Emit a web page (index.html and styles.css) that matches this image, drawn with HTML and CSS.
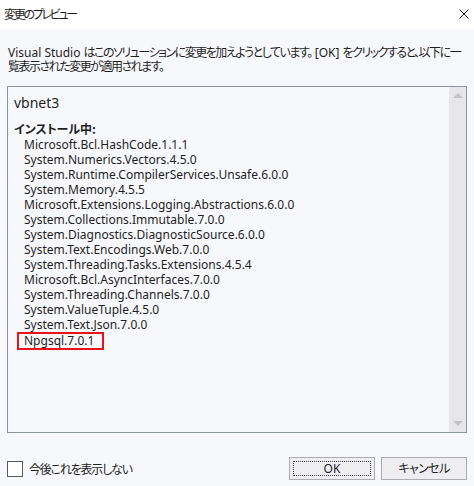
FILE: index.html
```html
<!DOCTYPE html>
<html lang="ja">
<head>
<meta charset="utf-8">
<title>変更のプレビュー</title>
<link rel="stylesheet" href="styles.css">
</head>
<body>
<div class="window">
  <div class="titlebar">
    <span class="title">変更のプレビュー</span>
    <svg class="close" width="10" height="10" viewBox="0 0 10 10" aria-hidden="true">
      <path d="M0.5 0.5 L9.5 9.5 M9.5 0.5 L0.5 9.5" stroke="#1a1a1a" stroke-width="1" fill="none"/>
    </svg>
  </div>
  <div class="body">
    <p class="desc">Visual Studio <span class="ja">はこのソリューションに変更を加えようとしています。</span> [OK] <span class="ja">をクリックすると、以下に一</span><br><span class="ja">覧表示された変更が適用されます。</span></p>
    <div class="listbox">
      <div class="listcontent">
        <div class="project">vbnet3</div>
        <div class="section">インストール中:</div>
        <div class="item">Microsoft.Bcl.HashCode.1.1.1</div>
        <div class="item">System.Numerics.Vectors.4.5.0</div>
        <div class="item">System.Runtime.CompilerServices.Unsafe.6.0.0</div>
        <div class="item">System.Memory.4.5.5</div>
        <div class="item">Microsoft.Extensions.Logging.Abstractions.6.0.0</div>
        <div class="item">System.Collections.Immutable.7.0.0</div>
        <div class="item">System.Diagnostics.DiagnosticSource.6.0.0</div>
        <div class="item">System.Text.Encodings.Web.7.0.0</div>
        <div class="item">System.Threading.Tasks.Extensions.4.5.4</div>
        <div class="item">Microsoft.Bcl.AsyncInterfaces.7.0.0</div>
        <div class="item">System.Threading.Channels.7.0.0</div>
        <div class="item">System.ValueTuple.4.5.0</div>
        <div class="item">System.Text.Json.7.0.0</div>
        <div class="item item-marked">Npgsql.7.0.1</div>
      </div>
      <div class="scrollbar">
        <span class="arrow arrow-up"></span>
        <span class="arrow arrow-down"></span>
      </div>
    </div>
    <div class="footer">
      <label class="check">
        <span class="checkbox"></span>
        <span class="check-label">今後これを表示しない</span>
      </label>
      <div class="buttons">
        <button class="btn btn-default"><span class="focus">OK</span></button>
        <button class="btn"><span class="focus focus-none ja-btn">キャンセル</span></button>
      </div>
    </div>
  </div>
</div>
</body>
</html>
```

FILE: styles.css
```css
html, body {
  margin: 0;
  padding: 0;
}
body {
  width: 474px;
  height: 486px;
  overflow: hidden;
  font-family: "Noto Sans", "Noto Sans CJK JP", sans-serif;
  font-size: 12px;
  color: #1e1e1e;
  background: #f7f8fc;
}
.window {
  display: flex;
  flex-direction: column;
  height: 486px;
}
.titlebar {
  height: 29px;
  background: #ffffff;
  display: flex;
  align-items: center;
  justify-content: space-between;
  padding: 0 5px 0 4px;
  flex: none;
}
.title {
  font-family: "Noto Sans CJK JP", sans-serif;
  font-feature-settings: "palt";
  letter-spacing: -2.3px;
  font-size: 12px;
  line-height: 16px;
  color: #1a1a1a;
  margin-top: -1px;
}
.close {
  display: block;
  margin-top: -1px;
}
.body {
  padding: 16px 7px 0 7px;
  display: flex;
  flex-direction: column;
}
.desc {
  margin: 0 0 0 1px;
  line-height: 13px;
  white-space: nowrap;
}
.ja {
  font-family: "Noto Sans CJK JP", sans-serif;
  font-feature-settings: "palt";
  letter-spacing: -1.5px;
}
.listbox {
  margin-top: 13px;
  height: 345px;
  border: 1px solid #8c95a4;
  background: #f7f8fc;
  display: flex;
}
.listcontent {
  flex: 1;
  padding: 6px 0 0 6px;
}
.project {
  font-size: 14px;
  line-height: 20px;
  margin-bottom: 8px;
}
.section {
  font-family: "Noto Sans CJK JP", sans-serif;
  font-feature-settings: "palt";
  font-weight: bold;
  line-height: 16px;
}
.item {
  line-height: 15px;
  padding-left: 10px;
  white-space: nowrap;
}
.item-marked {
  width: fit-content;
  border: 2px solid #e8141c;
  line-height: 14px;
  margin-left: 3px;
  padding: 0 8px 0 5px;
}
.scrollbar {
  width: 17px;
  background: #e7e7eb;
  display: flex;
  flex-direction: column;
  justify-content: space-between;
  align-items: center;
  padding: 6px 0 6px 0;
  box-sizing: border-box;
}
.arrow {
  width: 0;
  height: 0;
  border-left: 5px solid transparent;
  border-right: 5px solid transparent;
}
.arrow-up {
  border-bottom: 5px solid #c3c4ca;
}
.arrow-down {
  border-top: 5px solid #c3c4ca;
}
.footer {
  margin-top: 24px;
  display: flex;
  align-items: center;
  justify-content: space-between;
  height: 23px;
}
.check {
  display: flex;
  align-items: center;
  gap: 6px;
}
.checkbox {
  width: 14px;
  height: 14px;
  border: 1px solid #5a5a5a;
  background: #ffffff;
  margin-top: 1px;
}
.check-label {
  font-family: "Noto Sans CJK JP", sans-serif;
  font-feature-settings: "palt";
  letter-spacing: -1.2px;
  line-height: 16px;
}
.buttons {
  display: flex;
  gap: 6px;
}
.btn {
  width: 86px;
  height: 23px;
  border: 1px solid #adadad;
  background: #efeff2;
  padding: 3px;
  margin: 0;
  font-family: "Noto Sans", "Noto Sans CJK JP", sans-serif;
  font-size: 12px;
  color: #1e1e1e;
  box-sizing: border-box;
  display: flex;
}
.focus {
  flex: 1;
  display: flex;
  align-items: center;
  justify-content: center;
  border: 1px dotted #4a4a4a;
  line-height: 13px;
}
.focus-none {
  border-color: transparent;
}
.ja-btn {
  font-feature-settings: "palt";
  letter-spacing: -0.6px;
}
```
